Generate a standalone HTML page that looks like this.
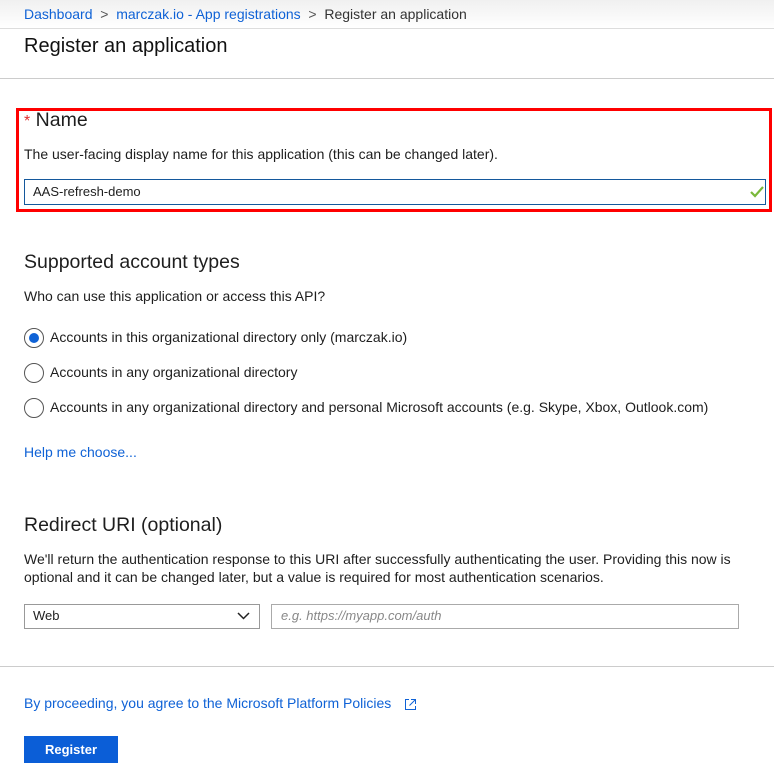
<!DOCTYPE html>
<html><head><meta charset="utf-8"><style>
*{margin:0;padding:0;box-sizing:border-box}
body{width:774px;height:775px;background:#fff;font-family:"Liberation Sans",sans-serif;color:#1e1e1e;position:relative;overflow:hidden}
.a{position:absolute;white-space:nowrap}
.lk{color:#0f62d6}
.h{font-size:19.5px;color:#1e1e1e}
.t{font-size:14px;color:#1e1e1e}
.radio{position:absolute;left:24px;width:20px;height:20px;border:1px solid #555;border-radius:50%}
</style></head><body>
<div class="a" style="left:0;top:0;width:774px;height:29px;background:linear-gradient(#f0f0f0,#fff);border-bottom:1px solid #ddd"></div>
<div class="a" style="left:24px;top:6px;font-size:14px"><span class="lk">Dashboard</span><span style="color:#555">&nbsp; &gt; &nbsp;</span><span class="lk">marczak.io - App registrations</span><span style="color:#555">&nbsp; &gt; &nbsp;</span><span style="color:#333">Register an application</span></div>
<div class="a" style="left:24px;top:35px;font-size:20px;color:#111">Register an application</div>
<div class="a" style="left:0;top:78px;width:774px;height:1px;background:#ccc"></div>

<div class="a" style="left:16px;top:108px;width:756px;height:104px;border:3px solid #f00"></div>
<div class="a h" style="left:24px;top:109px"><span style="color:#e03030;font-size:16px">*</span> Name</div>
<div class="a t" style="left:24px;top:146px">The user-facing display name for this application (this can be changed later).</div>
<div class="a" style="left:24px;top:179px;width:742px;height:26px;border:1px solid #14589c"></div>
<div class="a" style="left:33px;top:184px;font-size:13px">AAS-refresh-demo</div>
<svg class="a" style="left:750px;top:186px" width="14" height="12"><path d="M1 6 L5 10 L13 1" stroke="#7ab83a" stroke-width="2.2" fill="none"/></svg>

<div class="a h" style="left:24px;top:251px">Supported account types</div>
<div class="a t" style="left:24px;top:288px">Who can use this application or access this API?</div>
<div class="radio" style="top:328px"><div style="position:absolute;left:4px;top:4px;width:10px;height:10px;border-radius:50%;background:#0f62d6"></div></div>
<div class="a t" style="left:50px;top:329px">Accounts in this organizational directory only (marczak.io)</div>
<div class="radio" style="top:363px"></div>
<div class="a t" style="left:50px;top:364px">Accounts in any organizational directory</div>
<div class="radio" style="top:398px"></div>
<div class="a t" style="left:50px;top:399px">Accounts in any organizational directory and personal Microsoft accounts (e.g. Skype, Xbox, Outlook.com)</div>
<div class="a t lk" style="left:24px;top:444px;color:#0f62d6">Help me choose...</div>

<div class="a h" style="left:24px;top:514px">Redirect URI (optional)</div>
<div class="a t" style="left:24px;top:551px">We'll return the authentication response to this URI after successfully authenticating the user. Providing this now is</div>
<div class="a t" style="left:24px;top:569px">optional and it can be changed later, but a value is required for most authentication scenarios.</div>
<div class="a" style="left:24px;top:604px;width:236px;height:25px;border:1px solid #999"></div>
<div class="a" style="left:33px;top:608px;font-size:13px">Web</div>
<svg class="a" style="left:237px;top:612px" width="13" height="8"><path d="M1 1 L6.5 6.5 L12 1" stroke="#222" stroke-width="1.5" fill="none"/></svg>
<div class="a" style="left:271px;top:604px;width:468px;height:25px;border:1px solid #aaa"></div>
<div class="a" style="left:281px;top:608px;font-size:13px;color:#888;font-style:italic">e.g. https://myapp.com/auth</div>

<div class="a" style="left:0;top:666px;width:774px;height:1px;background:#ccc"></div>
<div class="a t lk" style="left:24px;top:695px;color:#0f62d6">By proceeding, you agree to the Microsoft Platform Policies</div>
<svg class="a" style="left:404px;top:698px" width="13" height="13"><path d="M5 1.5 H1.5 V11.5 H11.5 V8 M7 1.5 H11.5 V6 M11.5 1.5 L5.5 7.5" stroke="#0f62d6" stroke-width="1" fill="none"/></svg>
<div class="a" style="left:24px;top:736px;width:94px;height:27px;background:#0b5ed7;color:#fff;font-size:13px;font-weight:bold;text-align:center;line-height:27px">Register</div>
</body></html>
